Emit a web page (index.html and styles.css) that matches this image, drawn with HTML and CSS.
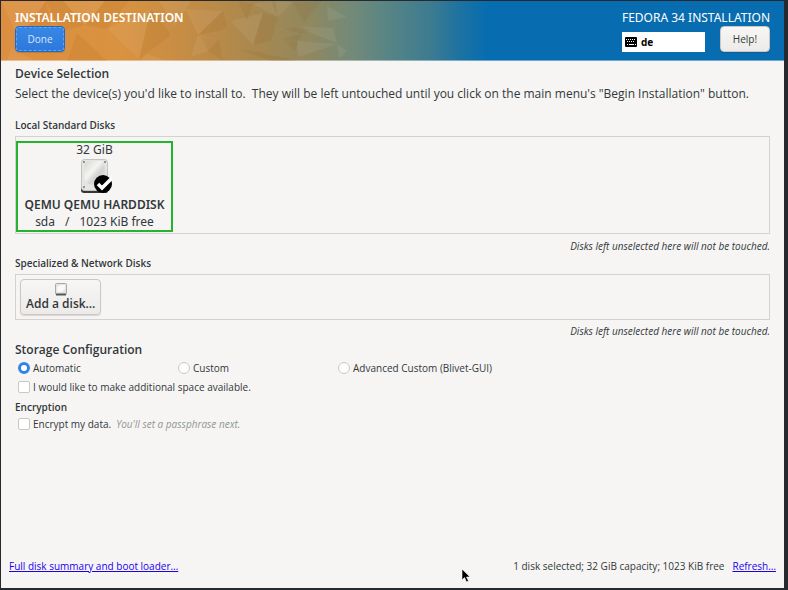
FILE: index.html
```html
<!DOCTYPE html>
<html lang="en">
<head>
<meta charset="utf-8">
<title>Installation Destination</title>
<link rel="stylesheet" href="styles.css">
</head>
<body>
<div class="window">
  <header class="banner">
    <svg class="banner-art" viewBox="0 0 490 60" aria-hidden="true">
      <g fill="#fff" opacity=".06">
        <path d="M0 0H45L18 38Z"/><path d="M62 0 104 0 84 24Z"/><path d="M106 28 150 8 138 58Z"/>
        <path d="M184 8 222 10 197 34Z"/><path d="M158 0 190 0 174 25Z"/><path d="M197 34 218 38 207 50 190 56Z"/>
        <path d="M252 3 270 0 277 16Z"/><path d="M292 25 332 27 336 42Z"/><path d="M296 40 336 43 297 56Z"/>
        <path d="M326 5 346 16 327 20Z"/><path d="M6 60 10 47 34 60Z"/><path d="M140 60 146 53 166 60Z"/>
        <path d="M274 0 292 1 277 16Z"/><path d="M336 43 346 50 338 58Z"/><path d="M230 20 262 12 252 44Z"/>
      </g>
      <g fill="#874800" opacity=".08">
        <path d="M45 0 62 0 84 24 60 30Z"/><path d="M104 0 128 0 106 28 84 24Z"/><path d="M138 58 150 8 170 34Z"/>
        <path d="M197 34 222 10 226 26 218 30Z"/><path d="M200 36 218 38 222 60 207 50Z"/><path d="M237 0 252 3 246 20Z"/>
        <path d="M283 28 298 25 310 29 300 33Z"/><path d="M284 39 297 41 294 51Z"/><path d="M237 48 262 52 297 60H270Z"/>
        <path d="M66 60 76 32 106 60Z"/><path d="M262 12 277 16 270 40 252 44Z"/><path d="M300 33 298 40 280 38Z"/>
        <path d="M18 38 45 0 50 28Z"/><path d="M292 1 320 0 303 22Z"/>
      </g>
    </svg>
    <div class="banner-left">
      <h1 class="banner-title">INSTALLATION DESTINATION</h1>
      <button class="btn btn-primary" type="button">Done</button>
    </div>
    <div class="banner-right">
      <div class="product">FEDORA 34 INSTALLATION</div>
      <div class="banner-tools">
        <button class="keyboard" type="button">
          <svg width="12" height="10" viewBox="0 0 12 10" aria-hidden="true"><rect width="12" height="10" rx="1"/><path d="M1 2.500H11M2 4.500H10" stroke="#fff" stroke-dasharray="1 1"/><path d="M2 7.500H3M4 7.500H9M10 7.500H11" stroke="#fff"/></svg>
          de
        </button>
        <button class="btn" type="button">Help!</button>
      </div>
    </div>
  </header>

  <main class="content">
    <h2 class="heading">Device Selection</h2>
    <p class="intro">Select the device(s) you'd like to install to.&nbsp; They will be left untouched until you click on the main menu's "Begin Installation" button.</p>

    <h3 class="subheading">Local Standard Disks</h3>
    <div class="disk-box disk-list">
      <button class="disk" type="button" aria-pressed="true">
        <span class="disk-size">32 GiB</span>
        <svg class="disk-icon" width="34" height="36" viewBox="0 0 34 36" aria-hidden="true">
          <defs><linearGradient id="metal" x2="1" y2="1"><stop stop-color="#d5d5d2"/><stop offset=".4" stop-color="#f4f4f2"/><stop offset=".6" stop-color="#d3d3d0"/><stop offset="1" stop-color="#efefed"/></linearGradient></defs>
          <path d="M3 30H30V33Q30 36 28 36H6Q3 36 3 33Z" fill="#343638"/>
          <rect x="3.500" y="2.500" width="26" height="31" rx="3" fill="#e5e5e3" stroke="#c3c3c0"/>
          <path d="M9 4H25Q28 12 27 20L16 28Q8 28 6 20V9Z" fill="url(#metal)"/>
          <g fill="#777"><circle cx="6" cy="5" r="1"/><circle cx="27" cy="5" r="1"/><circle cx="6" cy="30" r="1"/></g>
          <circle cx="25" cy="27" r="9"/><path d="M20 27 24 31 34 21" fill="none" stroke="#fff" stroke-width="3.500"/>
        </svg>
        <strong>QEMU QEMU HARDDISK</strong>
        <span class="disk-info"><span>sda</span><span>/</span><span>1023 KiB free</span></span>
      </button>
    </div>
    <p class="note">Disks left unselected here will not be touched.</p>

    <h3 class="subheading">Specialized &amp; Network Disks</h3>
    <div class="disk-box">
      <button class="btn add-disk" type="button">
        <svg width="12" height="13" viewBox="0 0 12 13" aria-hidden="true"><rect x=".5" y=".5" width="11" height="11" rx="1" fill="#e3e3e1" stroke="#aaa9a6"/><path d="M2 9V4L5 2H10V6L7 9Z" fill="#f8f8f6"/><path d="M1 11.500H11" stroke="#55565a" stroke-width="2"/></svg>
        Add a disk…
      </button>
    </div>
    <p class="note">Disks left unselected here will not be touched.</p>

    <h2 class="heading">Storage Configuration</h2>
    <div class="options">
      <label class="option"><input type="radio" name="storage" checked>Automatic</label>
      <label class="option"><input type="radio" name="storage">Custom</label>
      <label class="option"><input type="radio" name="storage">Advanced Custom (Blivet-GUI)</label>
    </div>
    <label class="option"><input type="checkbox">I would like to make additional space available.</label>
    <h3 class="subheading encryption">Encryption</h3>
    <label class="option"><input type="checkbox">Encrypt my data. <em class="hint">You'll set a passphrase next.</em></label>
  </main>

  <footer class="footer">
    <a href="#summary">Full disk summary and boot loader…</a>
    <span class="status">1 disk selected; 32 GiB capacity; 1023 KiB free</span>
    <a href="#refresh">Refresh…</a>
  </footer>
  <svg class="pointer" width="10" height="15" viewBox="0 0 10 15" aria-hidden="true"><path d="M1 1V12L3.500 9.500 5.500 14 7.500 13 5.500 9H9Z" stroke="#fff" stroke-width=".6"/></svg>
</div>
</body>
</html>
```
FILE: styles.css
```css
* { box-sizing: border-box; }

body {
  margin: 0;
  background: #26292d;
  color: #32383a;
  font: 10px/16px "Open Sans", "Noto Sans", sans-serif;
}

h1, h2, h3, p { margin: 0; }
button { font: inherit; color: inherit; margin: 0; }
svg { display: block; flex: none; }

.window {
  position: relative;
  display: flex;
  flex-direction: column;
  min-height: 100vh;
  border: solid #26292d;
  border-width: 1px 4px 2px 1px;
  background: #f6f5f4;
}

.banner {
  position: relative;
  display: flex;
  justify-content: space-between;
  height: 60px;
  padding: 8px 14px 0;
  color: #fff;
  border-bottom: 1px solid #ffffff66;
  background: linear-gradient(90deg, #dc8f40 0, #d99240 120px, #c08b46 200px, #a68850 260px, #8f8860 310px, #738a78 350px, #568486 390px, #3c7b90 430px, #1c72a2 460px, #086db0 485px) border-box;
}
.banner-art {
  position: absolute;
  top: 0;
  left: 0;
  width: 490px;
  height: 60px;
}
.banner-left, .banner-right { position: relative; }
.banner-title, .product {
  font-family: "Noto Sans", sans-serif;
  font-size: 12px;
  line-height: 17px;
}
.banner-title { font-weight: 600; }
.banner-tools {
  display: flex;
  justify-content: space-between;
  align-items: center;
}

.btn {
  display: block;
  height: 26px;
  min-width: 50px;
  padding: 0 8px;
  color: #32383a;
  border: 1px solid #cdc7c2;
  border-radius: 4px;
  background: linear-gradient(#f7f6f5, #edebe9);
  box-shadow: 0 1px 1px #0002;
}
.btn-primary {
  color: #d9e7f8;
  border-color: #1b6acb;
  background: linear-gradient(#3987e5, #2c79dc);
  outline: 1px dashed #65a3ea;
  outline-offset: -2px;
}

.keyboard {
  display: flex;
  align-items: center;
  gap: 4px;
  width: 83px;
  height: 20px;
  margin-top: 5px;
  padding: 0 3px;
  border: 0;
  background: #fff;
  color: #000;
  font-weight: 700;
}

.content { flex: 1; padding: 3px 14px 0; }
.heading { font-size: 12px; line-height: 20px; font-weight: 600; }
.intro { font-size: 12px; line-height: 20px; margin-bottom: 13px; }
.subheading { font-size: 10px; line-height: 16px; font-weight: 600; }

.disk-box {
  margin: 3px 0;
  padding: 4px;
  border: 1px solid #d3d2d0;
}
.disk-list { margin-bottom: 4px; padding: 4px 0 1px; }
.disk {
  display: flex;
  flex-direction: column;
  align-items: center;
  min-width: 157px;
  padding: 0 6px;
  border: 2px solid #26b32e;
  background: none;
  font-family: "Noto Sans", sans-serif;
  font-size: 12px;
  line-height: 17px;
}
.disk strong { font-weight: 600; }
.disk-size { line-height: 14px; }
.disk-icon { margin-bottom: 3px; }
.disk-info { display: flex; gap: 10px; }

.add-disk {
  display: flex;
  flex-direction: column;
  align-items: center;
  height: 36px;
  padding: 3px 5px;
  font-size: 12px;
  font-weight: 600;
}
.note { line-height: 17px; text-align: right; font-style: italic; }

.options { display: grid; grid-template-columns: 160px 160px 1fr; }
.option {
  display: flex;
  align-items: center;
  gap: 3px;
  padding-left: 3px;
}
.options + .option { margin-top: 3px; }
.option input {
  appearance: none;
  width: 12px;
  height: 12px;
  margin: 0;
  border: 1px solid #cdc7c2;
  border-radius: 2px;
  background: #fff;
}
.option input[type="radio"] { border-radius: 50%; }
.option input[type="radio"]:checked { border: 3px solid #3584e4; }
.hint { color: #929595; margin-left: 2px; }
.encryption { margin: 4px 0 1px; }

.footer { display: flex; padding: 0 8px 14px; }
.footer a { color: #1b00ee; text-decoration: underline; }
.status { margin: 0 8px 0 auto; }

/* Mouse pointer floating over the page */
.pointer { position: absolute; left: 460px; top: 567px; }
```
